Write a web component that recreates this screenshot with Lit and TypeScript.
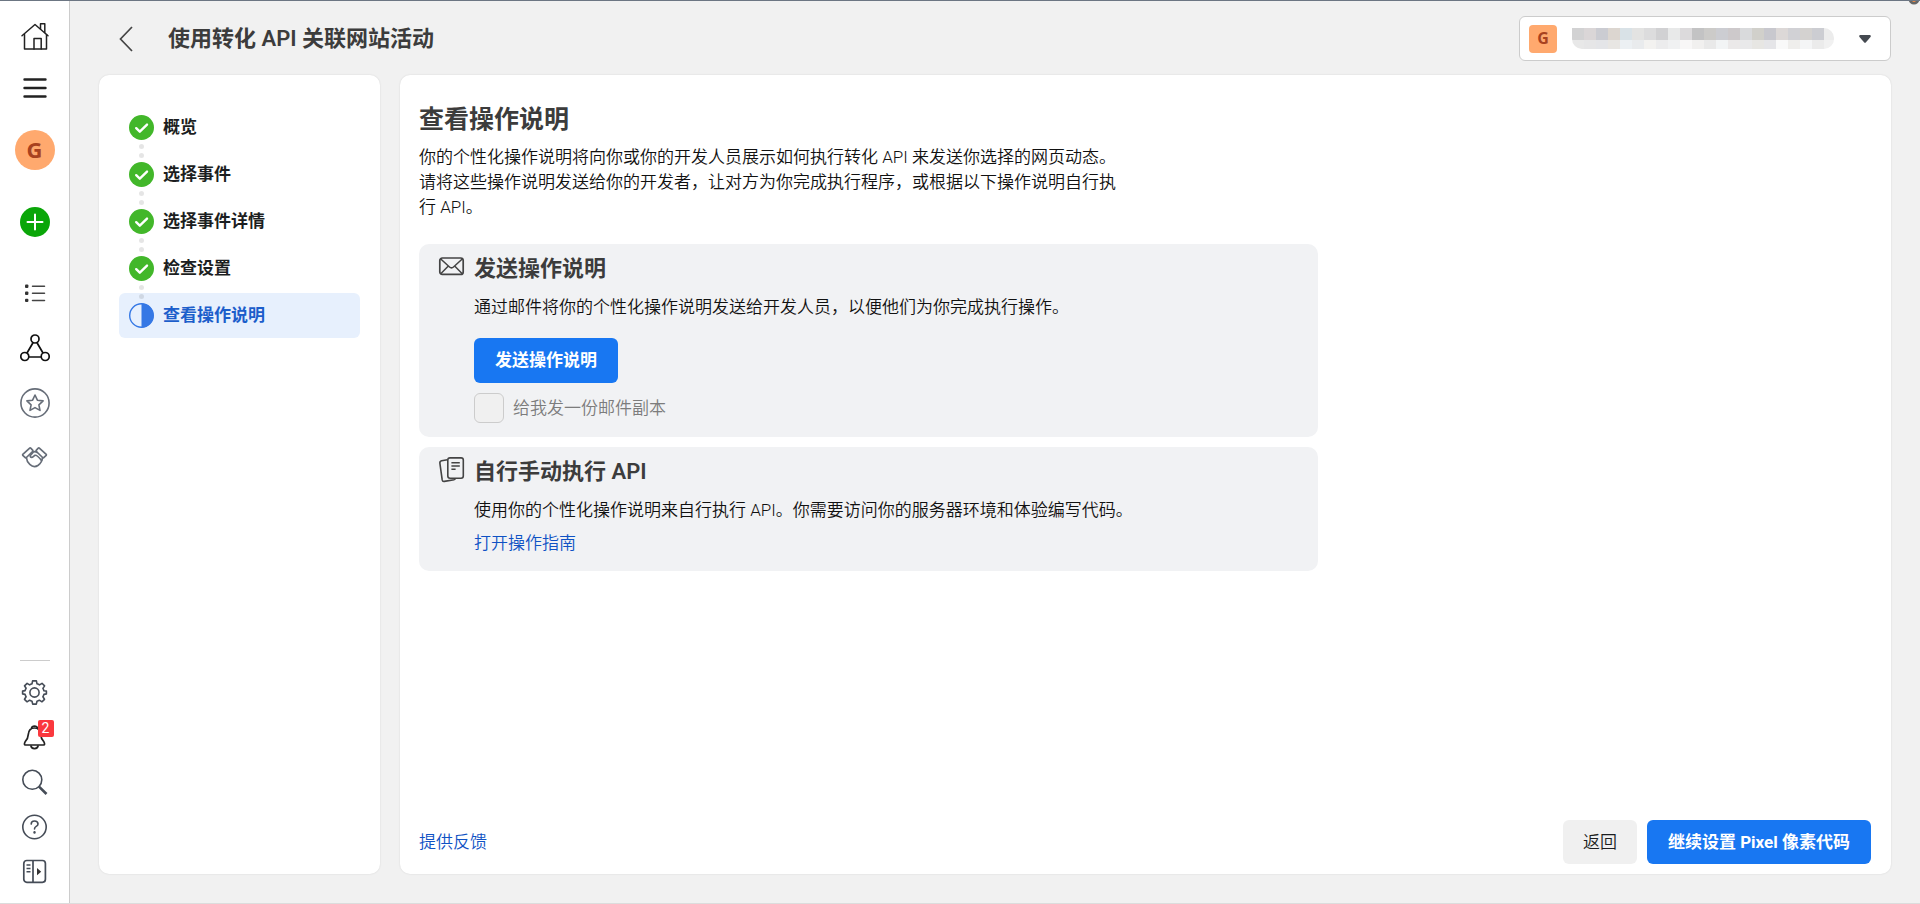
import { LitElement, html, svg, css } from "lit";
import { customElement, property } from "lit/decorators.js";
import { classMap } from "lit/directives/class-map.js";

const ICONS: Record<string, unknown> = {
  home: svg`<g stroke="#222" stroke-width="1.5" stroke-linejoin="round" stroke-linecap="round">
    <path d="M4.5 13.5V28H26.5V13.5"/><path d="M2 14.7 15 3.5 28 14.7"/>
    <path d="M20.5 8V2.8H24.8V11.5"/><path d="M14 28V17.6H21.2V28"/></g>`,
  menu: svg`<path d="M4.5 6.5H25.5M4.5 15H25.5M4.5 23.5H25.5" stroke="#222" stroke-width="2.4" stroke-linecap="round"/>`,
  plus: svg`<circle cx="15" cy="15" r="15" fill="#0aa608"/><path d="M15 7.5V22.5M7.5 15H22.5" stroke="#fff" stroke-width="2" stroke-linecap="round"/>`,
  list: svg`<g fill="#333"><rect x="5" y="6.5" width="3.4" height="3.4" rx="1"/><rect x="5" y="13.5" width="3.4" height="3.4" rx="1"/><rect x="5" y="20.7" width="3.4" height="3.4" rx="1"/></g>
    <path d="M12.5 8.2H24.5M12.5 15.2H24.5M12.5 22.4H24.5" stroke="#444" stroke-width="1.5" stroke-linecap="round"/>`,
  network: svg`<g stroke="#111" stroke-width="1.7"><circle cx="15" cy="6" r="4"/><circle cx="4.8" cy="23.5" r="4"/><circle cx="25.2" cy="23.5" r="4"/>
    <path d="M13 9.7 7 20M17 9.7 23 20M8.8 24H21.2"/></g>`,
  star: svg`<g stroke="#666d78" stroke-width="1.6" stroke-linejoin="round"><circle cx="15" cy="15" r="14.1"/>
    <path d="M15 7 17.4 12.2 23.1 12.9 18.9 16.8 20 22.4 15 19.6 10 22.4 11.1 16.8 6.9 12.9 12.6 12.2Z"/></g>`,
  hands: svg`<g stroke="#666d78" stroke-width="1.7" stroke-linejoin="round" stroke-linecap="round">
    <path d="M2.8 11.4 9.4 5.3Q10.2 4.6 11 5.4L12.8 7.3Q13.2 7.9 12.6 8.5L6.4 14.5Q5.6 15.1 5 14.4L2.8 12.4Q2.4 11.9 2.8 11.4Z"/>
    <path d="M26.2 11.4 19.6 5.3Q18.8 4.6 18 5.4L16.2 7.3Q15.8 7.9 16.4 8.5L22.6 14.5Q23.4 15.1 24 14.4L26.2 12.4Q26.6 11.9 26.2 11.4Z"/>
    <path d="M6.5 15Q6.8 18.8 9.8 21.4Q13.9 25.2 18.2 22.2Q22 19.4 22.4 15"/>
    <path d="M12.8 9.2Q15 7.8 17 9.4M13 9.4 10.3 12.5Q9.8 14.7 12.6 14.2L14.8 12.4Q16.8 11.5 21.6 17.6"/></g>`,
  gear: svg`<g stroke="#454c57" stroke-width="1.6" stroke-linejoin="round"><circle cx="14.5" cy="15.5" r="4.6"/>
    <path d="M12.6 3.9H16.4L17 6.8Q18.6 7.2 19.5 7.9L22 6.3 24.6 8.9 22.9 11.4Q23.6 12.6 23.9 13.8L26.4 14.1V16.9L23.9 17.4Q23.6 18.7 22.9 19.8L24.5 22.3 21.9 24.8 19.4 23.2Q18.3 23.9 17 24.3L16.3 27.1H12.7L12 24.3Q10.7 23.9 9.6 23.2L7.1 24.8 4.5 22.3 6.1 19.8Q5.4 18.7 5.1 17.4L2.6 16.9V14.1L5.1 13.6Q5.4 12.4 6.1 11.3L4.5 8.8 7.1 6.3 9.6 7.9Q10.7 7.2 12 6.8Z"/></g>`,
  bell: svg`<g stroke="#222" stroke-width="1.7" stroke-linejoin="round"><path d="M11.5 6.2Q12 4.2 14.5 4.2T17.5 6.2"/>
    <path d="M14.5 6Q8.8 6 8.3 12.4Q8 17 5.2 19.7Q3.5 23 5.5 23H23.5Q25.5 23 23.8 19.7Q21 17 20.7 12.4Q20.2 6 14.5 6Z"/><path d="M10.8 23.4Q11.2 26.6 14.5 26.6T18.2 23.4"/></g>`,
  search: svg`<g stroke="#454c57" stroke-width="1.6"><circle cx="12.3" cy="12.8" r="9.5"/><path d="M19 19.6 26.5 27" stroke-width="2.6"/></g>`,
  help: svg`<g stroke="#454c57" stroke-width="1.6" stroke-linecap="round"><circle cx="14.5" cy="15" r="11.7"/>
    <path d="M11.2 12.1Q11.2 9 14.5 9T18 11.9Q18 13.4 16.2 14.4Q14.5 15.4 14.5 17"/><path d="M14.5 20.3V20.6" stroke-width="2.4"/></g>`,
  panel: svg`<g stroke="#454c57" stroke-width="1.7"><rect x="3.8" y="3.5" width="21.6" height="21.8" rx="3"/><path d="M13 3.5V25.5"/>
    <path d="M6.5 8H10.5M6.5 11.5H10.5M6.5 14.8H10.5" stroke-width="1.5"/></g><path d="M17 11 21.2 14.7 17 18.3Z" fill="#333"/>`,
  mail: svg`<g stroke="#444" stroke-width="1.7" stroke-linejoin="round"><rect x="2.8" y="6" width="23.4" height="16.4" rx="2.5"/>
    <path d="M3.5 6.7 12.5 15Q14.5 16.8 16.5 15L25.5 6.7M3.5 22 11.1 14.2M25.5 22 17.9 14.2" stroke-width="1.5"/></g>`,
  docs: svg`<g stroke="#444" stroke-width="1.6" stroke-linejoin="round"><rect x="10.8" y="2.9" width="15.5" height="20.4" rx="2.2"/>
    <path d="M10.4 4.7 4.6 5.8Q2.6 6.2 2.9 8.3L5.2 24.9Q5.5 26.7 7.4 26.4L17.1 24.7 18.6 23.7"/>
    <path d="M14.4 7.7H22.8M14.4 11H22.8M14.4 14.3H18.6"/></g>`,
};

const icon = (name: string) => html`<svg class="icon" width="30" height="30" viewBox="0 0 30 30" fill="none" aria-hidden="true">${ICONS[name]}</svg>`;

@customElement("side-rail")
class SideRail extends LitElement {
  static styles = css`
    :host { display: flex; flex-direction: column; box-sizing: border-box; width: 70px; flex: none; background: #fff; border-right: 1px solid #ccc; padding: 9px 0; }
    .group { display: flex; flex-direction: column; }
    .primary { margin-top: 7px; }
    .footer { margin-top: auto; }
    button { display: grid; place-items: center; border: 0; background: none; padding: 0; height: 52px; width: 100%; cursor: pointer; }
    .icon { display: block; }
    .tall button { height: 72px; }
    .primary button { height: 55px; }
    .footer button { height: 45px; }
    .avatar { display: grid; place-items: center; box-sizing: border-box; width: 40px; height: 40px; padding-bottom: 2px; border-radius: 50%; background: #ffa96e; color: #a8421f; font: 700 22px/38px "Open Sans", sans-serif; }
    .rule { height: 1px; border: 0; background: #ccc; width: 30px; margin: 0 auto 8px; }
    .bell { position: relative; display: block; }
    .badge { position: absolute; left: 18px; top: -2px; width: 16px; height: 17px; border-radius: 2px; background: #fa383e; color: #fff; font: 14px/17px Roboto, sans-serif; text-align: center; }
  `;
  render() {
    const b = (name: string, label: string) => html`<button aria-label=${label}>${icon(name)}</button>`;
    return html`
      <div class="group">${b("home", "首页")}${b("menu", "菜单")}</div>
      <div class="group tall"><button><span class="avatar">G</span></button>${b("plus", "创建")}</div>
      <nav class="group primary">${b("list", "列表")}${b("network", "数据源")}${b("star", "自定义转化")}${b("hands", "合作伙伴")}</nav>
      <div class="group footer">
        <hr class="rule" />
        ${b("gear", "设置")}
        <button aria-label="通知"><span class="bell">${icon("bell")}<span class="badge">2</span></span></button>
        ${b("search", "搜索")}${b("help", "帮助")}${b("panel", "展开")}
      </div>`;
  }
}

@customElement("step-list")
class StepList extends LitElement {
  @property({ attribute: false }) steps: string[] = [];
  static styles = css`
    :host { display: block; box-sizing: border-box; width: 281px; flex: none; background: #fff; border-radius: 10px; padding: 30px 20px; box-shadow: 0 0 2px #0000001f; }
    ol { list-style: none; margin: 0; padding: 0; display: grid; gap: 2px; }
    .step { position: relative; display: flex; align-items: center; gap: 9px; height: 45px; padding: 0 10px; border-radius: 6px; font-weight: 600; font-size: 17px; line-height: 25px; color: #1c1e21; }
    .step.current { background: #e7f0fd; color: #1c5ecb; }
    .mark { display: block; flex: none; }
    .dots { position: absolute; left: 20px; top: -8px; display: grid; gap: 4px; }
    .dots i { width: 5px; height: 5px; border-radius: 50%; background: #0000001a; }
  `;
  render() {
    const last = this.steps.length - 1;
    return html`<ol>${this.steps.map((s, i) => html`
      <li class=${classMap({ step: true, current: i === last })}>
        ${i ? html`<span class="dots"><i></i><i></i></span>` : ""}
        <svg class="mark" width="25" height="25" viewBox="0 0 25 25" fill="none" aria-hidden="true">
          ${i === last
            ? svg`<circle cx="12.5" cy="12.5" r="11.8" stroke="#3578e5" stroke-width="1.4"/><path d="M12.5 .5a12 12 0 0 1 0 24Z" fill="#3578e5"/>`
            : svg`<circle cx="12.5" cy="12.5" r="12.5" fill="#42b72a"/><path d="M7.2 13.2 10.8 16.7 18 9.6" stroke="#fff" stroke-width="2.4" stroke-linecap="round" stroke-linejoin="round"/>`}
        </svg>${s}
      </li>`)}</ol>`;
  }
}

const SWATCHES = [
  ["#d2d2d3", "#e8e8e8"], ["#dad6d7", "#e6e6e7"], ["#cbccd2", "#e4e5e8"], ["#dcd6d0", "#e8e6e3"], ["#d9e2e7", "#ecf0f3"], ["#e3e3e2", "#e9ebed"],
  ["#dcdcdd", "#f3f2f0"], ["#d1d1d3", "#ececed"], ["#e8e9e9", "#f0f1f2"], ["#dcdadc", "#f8f7f7"], ["#c3c3c4", "#f1f0ef"], ["#cccbc9", "#e9e9e9"],
  ["#cccdd2", "#f2f4f5"], ["#cdc9cb", "#ebe9e9"], ["#d9dadc", "#e9e9ea"], ["#d1d0cb", "#e7e6e3"], ["#c8c8ce", "#e5e5e8"], ["#dcd8d7", "#f9f9f9"],
  ["#d1d1d5", "#efeeec"], ["#d4d2d0", "#f4f5f6"], ["#cccdd2", "#ebebeb"], ["#ececec", "#f1f1f1"],
];

@customElement("account-picker")
class AccountPicker extends LitElement {
  static styles = css`
    :host { display: grid; grid-template-columns: 372px; box-sizing: border-box; height: 45px; }
    select, .face { grid-area: 1 / 1; box-sizing: border-box; height: 45px; }
    select { appearance: none; width: 100%; background: #fff; border: 1px solid #ccc; border-radius: 6px; }
    .face { pointer-events: none; display: flex; align-items: center; padding: 0 20px 0 10px; z-index: 1; }
    .logo { width: 28px; height: 28px; border-radius: 4px; background: #ffa96e; color: #a8421f; font: 700 16px/27px "Open Sans", sans-serif; text-align: center; }
    .mosaic { display: block; margin-left: 15px; width: 262px; height: 21px; border-radius: 0 10px 10px 10px; }
    .caret { margin-left: auto; }
  `;
  render() {
    return html`
      <select aria-label="账户"><option></option></select>
      <div class="face">
        <span class="logo">G</span>
        <svg class="mosaic" width="262" height="21" aria-hidden="true">${SWATCHES.map(([a, b], i) => svg`
          <rect x=${i * 12} y="0" width="12" height="12" fill=${a}/><rect x=${i * 12} y="12" width="12" height="9" fill=${b}/>`)}</svg>
        <svg class="caret" width="12" height="8" viewBox="0 0 12 8" aria-hidden="true"><path d="M1 0H11Q12.4 .6 11.5 2L7 7.2Q6 8.2 5 7.2L.5 2Q-.4 .6 1 0Z" fill="#444950"/></svg>
      </div>`;
  }
}

@customElement("app-root")
class AppRoot extends LitElement {
  static styles = css`
    :host { position: relative; display: flex; box-sizing: border-box; min-height: 100vh; overflow: hidden; background: #f1f1f1; border-top: 1px solid #6c7683; border-bottom: 1px solid #dcdcdc; color: #111; font: 350 17px/25px Roboto, "Noto Sans CJK SC", sans-serif; }
    .page { flex: 1; min-width: 0; display: flex; flex-direction: column; padding: 15px 29px 29px; }
    .top { display: flex; align-items: center; height: 45px; margin-bottom: 14px; }
    .back { display: grid; place-items: center; border: 0; background: none; padding: 0; width: 26px; height: 30px; margin: 0 29px 0 14px; cursor: pointer; }
    .title { margin: 0; font-size: 22px; line-height: 30px; font-weight: 600; color: #3c3c3c; flex: 1; }
    .columns { flex: 1; display: flex; gap: 20px; }
    main { flex: 1; min-width: 0; box-sizing: border-box; display: flex; flex-direction: column; background: #fff; border-radius: 10px; padding: 29px 20px 10px 19px; box-shadow: 0 0 2px #0000001f; }
    h2, h3, p { margin: 0; }
    h2 { font-size: 25px; line-height: 32px; font-weight: 600; color: #3c3c3c; }
    .intro { max-width: 712px; margin: 9px 0 24px; }
    .card { box-sizing: border-box; max-width: 899px; display: flex; gap: 7px; background: #f1f2f4; border-radius: 10px; padding: 8px 15px 14px 18px; }
    .card + .card { margin-top: 10px; }
    .icon { display: block; flex: none; }
    .body { display: flex; flex-direction: column; align-items: flex-start; }
    h3 { font-size: 22px; line-height: 30px; font-weight: 600; color: #3c3c3c; margin: 2px 0 11px; }
    button.action { border: 0; border-radius: 6px; padding: 0 20px; height: 44px; font: inherit; background: #f0f0f0; color: #1c1e21; cursor: pointer; }
    button.action.blue { background: #1877f2; color: #fff; font-weight: 700; padding: 0 21px; }
    .body button.action { height: 45px; margin: 18px 0 10px; }
    .copy { display: flex; align-items: center; gap: 9px; color: #7c7c7c; height: 30px; }
    .copy input { appearance: none; box-sizing: border-box; width: 30px; height: 30px; margin: 0; border: 1px solid #ccc; border-radius: 6px; background: #f0f0f0; }
    a { color: #0f52c4; text-decoration: none; }
    .body a { margin: 8px 0 1px; }
    .foot { margin-top: auto; display: flex; align-items: center; gap: 10px; }
    .foot a { margin-right: auto; }
    .corner { position: absolute; right: 0; top: -1px; }
  `;
  render() {
    return html`
      <side-rail></side-rail>
      <div class="page">
        <header class="top">
          <button class="back" aria-label="返回"><svg width="14" height="26" viewBox="0 0 14 26" fill="none" aria-hidden="true"><path d="M13 1 1.5 13 13 25" stroke="#444" stroke-width="1.7"/></svg></button>
          <h1 class="title">使用转化 API 关联网站活动</h1>
          <account-picker></account-picker>
        </header>
        <div class="columns">
          <step-list .steps=${["概览", "选择事件", "选择事件详情", "检查设置", "查看操作说明"]}></step-list>
          <main>
            <h2>查看操作说明</h2>
            <p class="intro">你的个性化操作说明将向你或你的开发人员展示如何执行转化 API 来发送你选择的网页动态。<br />请将这些操作说明发送给你的开发者，让对方为你完成执行程序，或根据以下操作说明自行执行 API。</p>
            <section class="card">
              ${icon("mail")}
              <div class="body">
                <h3>发送操作说明</h3>
                <p>通过邮件将你的个性化操作说明发送给开发人员，以便他们为你完成执行操作。</p>
                <button class="action blue">发送操作说明</button>
                <label class="copy"><input type="checkbox" disabled />给我发一份邮件副本</label>
              </div>
            </section>
            <section class="card">
              ${icon("docs")}
              <div class="body">
                <h3>自行手动执行 API</h3>
                <p>使用你的个性化操作说明来自行执行 API。你需要访问你的服务器环境和体验编写代码。</p>
                <a href="#guide">打开操作指南</a>
              </div>
            </section>
            <footer class="foot">
              <a href="#feedback">提供反馈</a>
              <button class="action">返回</button>
              <button class="action blue">继续设置 Pixel 像素代码</button>
            </footer>
          </main>
        </div>
      </div>
      <svg class="corner" width="12" height="5" aria-hidden="true"><circle cx="6" cy="-1" r="5.5" fill="#666"/><circle cx="6" cy="0" r="2" fill="#f58a42"/></svg>`;
  }
}
